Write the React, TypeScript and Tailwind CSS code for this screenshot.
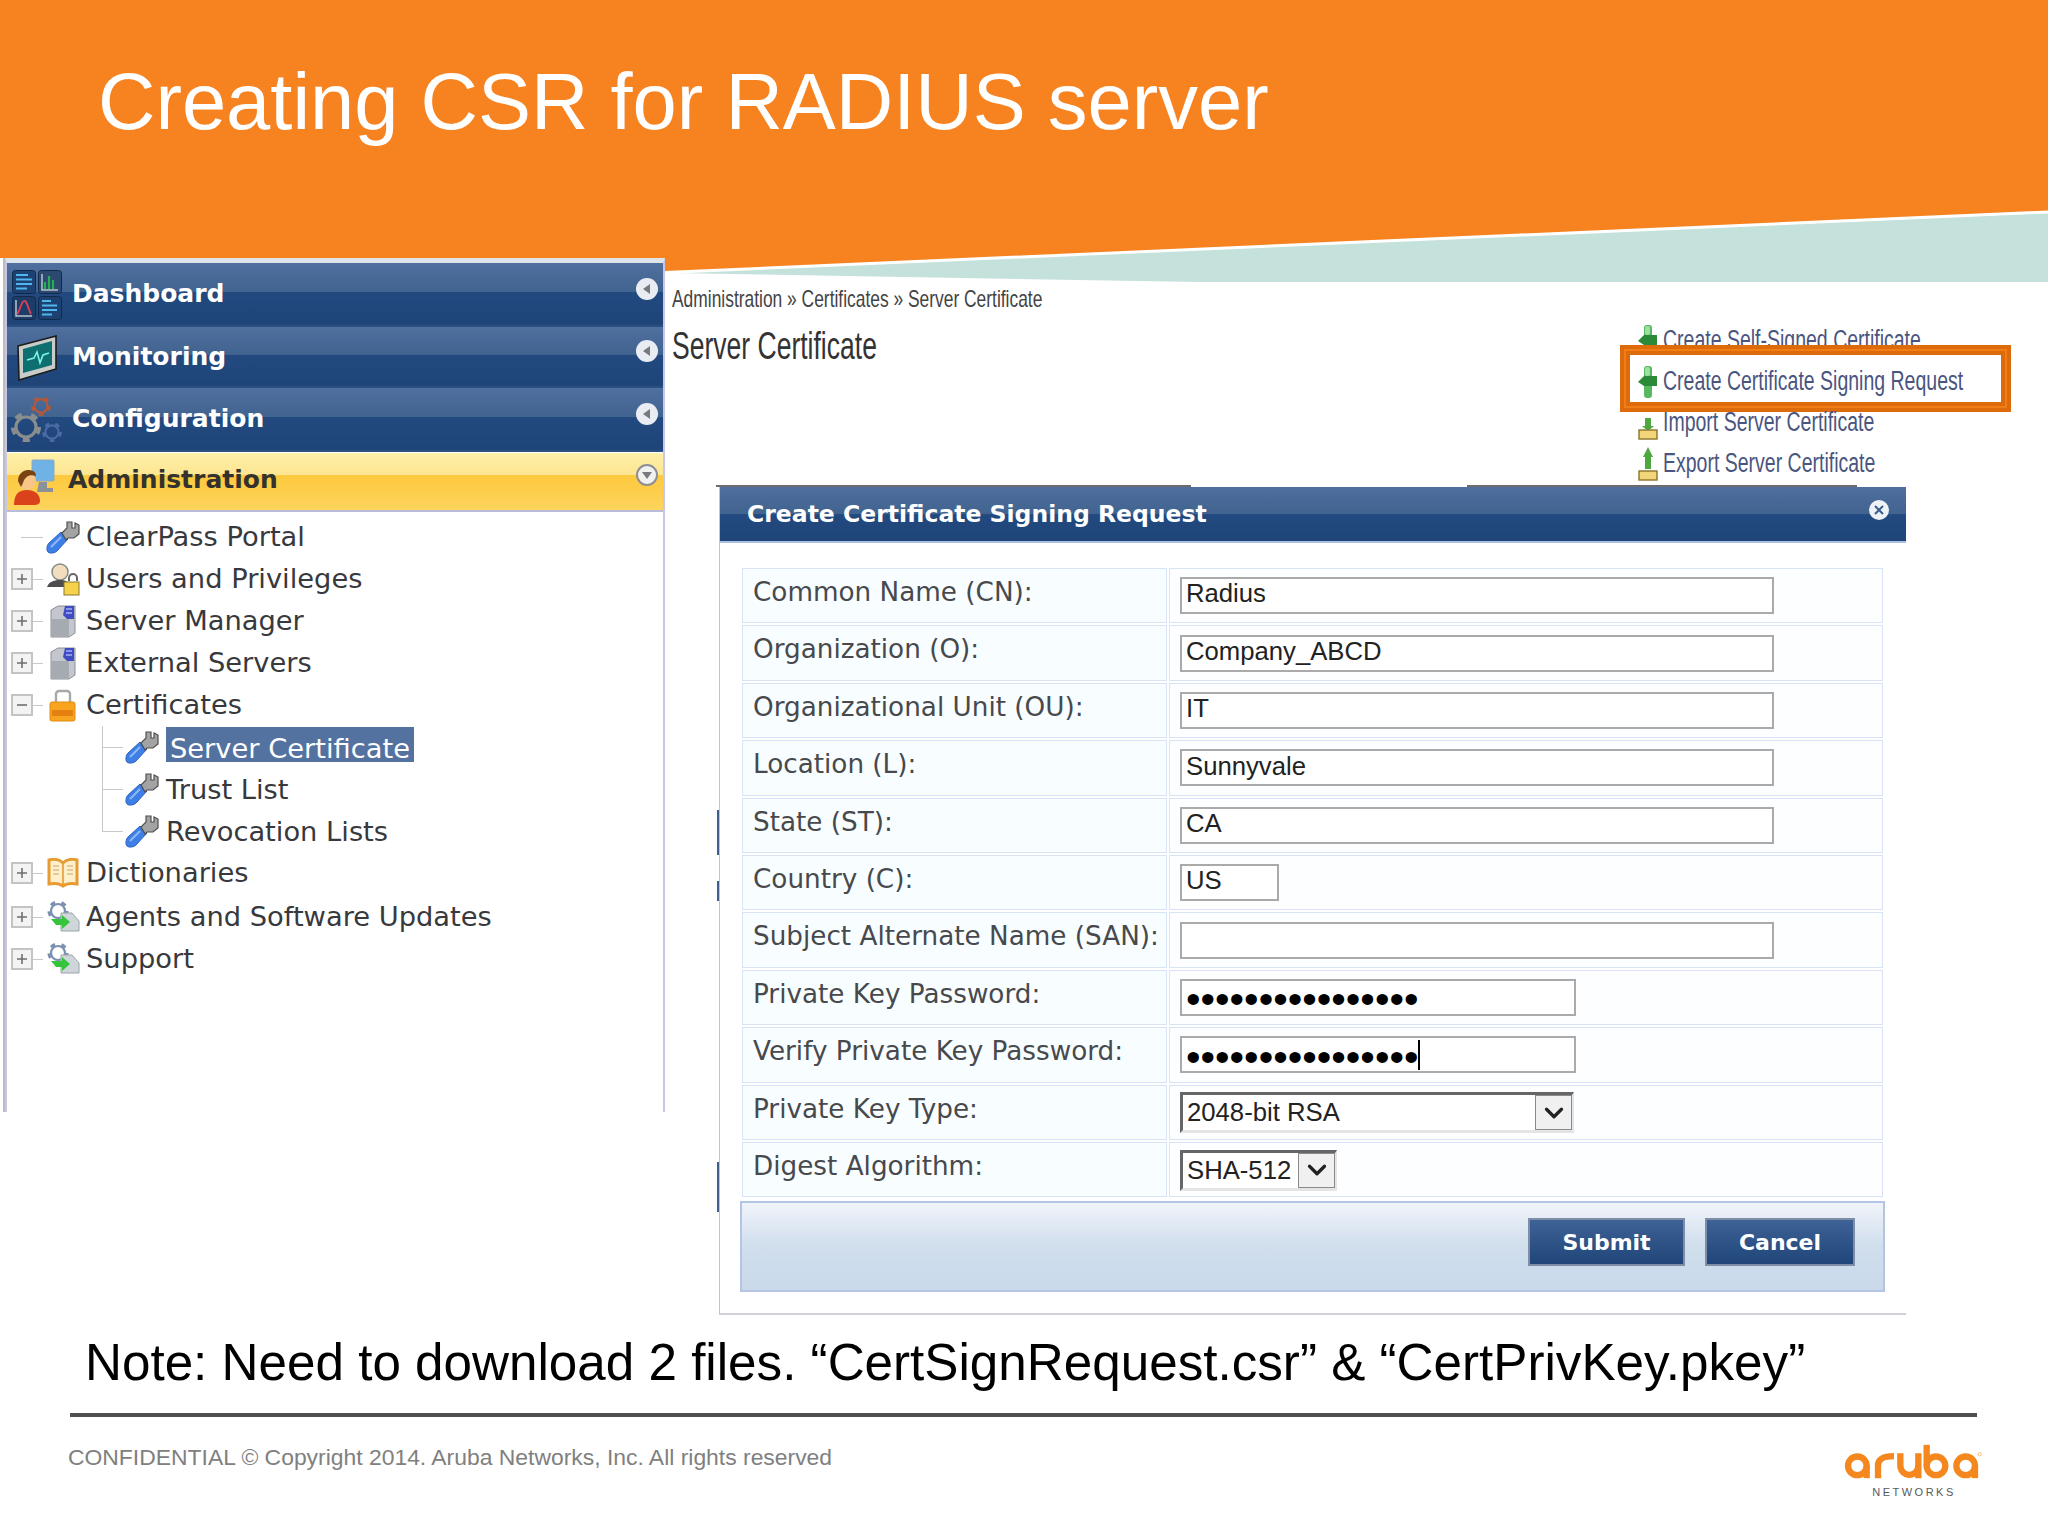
import { ChevronDown } from 'lucide-react';
import { clsx } from 'clsx';

function DashboardIcon() {
  return (
    <svg width="50" height="50" viewBox="0 0 50 50">
      <rect x="0.5" y="0.5" width="23" height="23" rx="3" fill="#1d4170" stroke="#12294a" />
      <rect x="26.5" y="0.5" width="23" height="23" rx="3" fill="#2c4a70" stroke="#12294a" />
      <rect x="0.5" y="26.5" width="23" height="23" rx="3" fill="#1d3c68" stroke="#12294a" />
      <rect x="26.5" y="26.5" width="23" height="23" rx="3" fill="#1d4170" stroke="#12294a" />
      <path d="M4 5h12M4 9.5h16M4 14h16M4 18.5h11" stroke="#4fb6ee" strokeWidth="2" />
      <path d="M30 4v16h16" stroke="#b9c4cf" strokeWidth="1.5" fill="none" />
      <path d="M33 19v-7M37 19V6M41 19v-9" stroke="#26b14e" strokeWidth="2.2" />
      <path d="M4 30v16h16" stroke="#b9c4cf" strokeWidth="1.5" fill="none" />
      <path d="M5 44c3-3 4-12 7-13s4 8 7 13" stroke="#e0405a" strokeWidth="1.8" fill="none" />
      <path d="M30 31h9M30 35.5h15M30 40h15M30 44.5h10" stroke="#4fb6ee" strokeWidth="2" />
    </svg>
  );
}

function MonitorIcon() {
  return (
    <svg width="42" height="46" viewBox="0 0 42 46">
      <path d="M2 11 40 1v33L3 45Z" fill="#c9cdc9" stroke="#1b1b1b" strokeWidth="1.6" />
      <path d="M7 14 36 6v24L7 38Z" fill="#0e6f70" />
      <path d="M11 25l7-2 3-6 3 11 3-8 6-2" stroke="#7ff3e6" strokeWidth="1.6" fill="none" />
    </svg>
  );
}

function Gear({ x, y, r, color }: { x: number; y: number; r: number; color: string }) {
  return (
    <g fill="none" stroke={color}>
      <circle cx={x} cy={y} r={r} strokeWidth={r * 0.32} />
      <circle cx={x} cy={y} r={r * 1.3} strokeWidth={r * 0.42} strokeDasharray={`${r * 0.7} ${r * 0.95}`} />
    </g>
  );
}

function GearsIcon() {
  return (
    <svg width="52" height="50" viewBox="0 0 52 50">
      <Gear x={30} y={11} r={6.6} color="#b5583a" />
      <Gear x={15} y={32} r={10} color="#8a8d8e" />
      <Gear x={41} y={37} r={6.6} color="#4a6ba3" />
    </svg>
  );
}

function AdminIcon() {
  return (
    <svg width="44" height="46" viewBox="0 0 44 46">
      <rect x="19" y="1" width="22" height="21" rx="1" fill="#6fb2e6" stroke="#8fa8bd" />
      <path d="M26 23h8v6h6v4H24Z" fill="#8a9199" />
      <circle cx="14" cy="22" r="9" fill="#f7c688" />
      <path d="M5 22c0-7 5-11 10-11s8 2 8 6c-6-2-11 0-13 7l-2 4Z" fill="#7a4310" />
      <path d="M1 46c0-10 4-15 13-15s13 5 13 11c0 3-3 4-6 4Z" fill="#d9421a" />
    </svg>
  );
}

function WrenchIcon() {
  return (
    <svg width="34" height="34" viewBox="0 0 34 34">
      <path d="M15 12l7 7-11 12c-2 2-7 3-9 1s-1-7 1-9Z" fill="#3d7fe6" stroke="#2a62c4" />
      <path d="M5 27 15 17" stroke="#8fb8f5" strokeWidth="2" />
      <path d="M16 13l5-5V2h5v6h3V3l4 2v9l-5 4h-6l-2 2Z" fill="#a3a3a3" stroke="#4f4f4f" strokeWidth="1.2" />
    </svg>
  );
}

function UsersIcon() {
  return (
    <svg width="34" height="34" viewBox="0 0 34 34">
      <circle cx="14" cy="10" r="8" fill="#f3ddbf" stroke="#8a8a8a" strokeWidth="1.5" />
      <path d="M1 25c2-5 6-7 13-7s9 2 9 7Z" fill="#4d4d4d" />
      <path d="M23 19v-3a4 4 0 0 1 8 0v3" fill="none" stroke="#666" strokeWidth="2" />
      <rect x="18" y="20" width="15" height="13" fill="#f6d24a" stroke="#8a7a30" />
    </svg>
  );
}

function ServerIcon() {
  return (
    <svg width="28" height="34" viewBox="0 0 28 34">
      <path d="M2 6 9 2h17v27l-6 4H2Z" fill="#c3c7cd" stroke="#8b8f96" />
      <path d="M2 15h18v18H2Z" fill="#a6aab1" />
      <path d="M14 11l2-9h9v13h-7Z" fill="#3f4cc4" />
      <path d="M17 5h6M17 9h6" stroke="#a8b0f0" strokeWidth="1.4" />
    </svg>
  );
}

function LockIcon() {
  return (
    <svg width="28" height="34" viewBox="0 0 28 34">
      <path d="M7 15V6a3 3 0 0 1 3-3h8a3 3 0 0 1 3 3v9" fill="none" stroke="#a8a8a8" strokeWidth="2.4" />
      <rect x="1" y="14" width="25" height="19" rx="2" fill="#f8a41f" stroke="#e08a10" />
      <rect x="3" y="22" width="21" height="6" fill="#e4800f" />
    </svg>
  );
}

function BookIcon() {
  return (
    <svg width="34" height="30" viewBox="0 0 34 30">
      <path d="M17 5C13 1 7 1 3 2v24c5-1 10-1 14 2 4-3 9-3 14-2V2c-4-1-10-1-14 3Z" fill="#ffefcb" stroke="#e79c33" strokeWidth="3" />
      <path d="M17 5v23" stroke="#e79c33" strokeWidth="1.6" />
      <path d="M7 8h6M7 12h6M7 16h6M21 8h6M21 12h6M21 16h6" stroke="#dcc08a" strokeWidth="1.4" />
    </svg>
  );
}

function AgentIcon() {
  return (
    <svg width="34" height="34" viewBox="0 0 34 34">
      <Gear x={12} y={11} r={7} color="#7b8fb0" />
      <path d="M15 13h11l7 8v10H15Z" fill="#cfd6da" stroke="#9aa3a8" />
      <path d="M5 19h11v-4l8 7-8 7v-4H10Z" fill="#35c43c" />
    </svg>
  );
}

function GreenPlus() {
  return (
    <svg width="20" height="32" viewBox="0 0 20 32">
      <rect x="6" y="0" width="8" height="32" rx="3" fill="#58b85f" />
      <path d="M0 16l6-6h13v10H6Z" fill="#2b8a37" />
      <rect x="7" y="1" width="5" height="9" rx="2" fill="#9fe0a2" />
    </svg>
  );
}

function BoxArrow({ tall }: { tall?: boolean }) {
  return (
    <svg width="20" height="34" viewBox="0 0 20 34">
      <path d={tall ? 'M10 0 15 10h-2v12H7V10H5Z' : 'M7 12h6v8h3l-6 5-6-5h3Z'} fill="#4ca83f" />
      <rect x="1" y="24" width="18" height="9" fill="#f2d479" stroke="#8c7428" strokeWidth="1.4" />
    </svg>
  );
}

function CircleArrow({ open }: { open?: boolean }) {
  return (
    <div
      className={clsx(
        'ml-auto mr-[5px] -mt-[13px] grid h-[22px] w-[22px] place-items-center rounded-full',
        open ? 'border-2 border-[#8d8f96] bg-[#f1f1ef]' : 'bg-[#e9edf3]',
      )}
    >
      <svg width="12" height="12" viewBox="0 0 12 12">
        <path d={open ? 'M1 3h10L6 10Z' : 'M9 1v10L2 6Z'} fill="#77797f" />
      </svg>
    </div>
  );
}

const navRows = [
  { label: 'Dashboard', icon: <DashboardIcon />, height: 'h-[64px]' },
  { label: 'Monitoring', icon: <MonitorIcon />, height: 'h-[61px]' },
  { label: 'Configuration', icon: <GearsIcon />, height: 'h-[64px]' },
];

function Expander({ open }: { open?: boolean }) {
  return (
    <div className="grid h-[22px] w-[22px] place-items-center border-2 border-[#c4c4c4] bg-[#f3f3f3]">
      <svg width="12" height="12" viewBox="0 0 12 12">
        <path d={open ? 'M1 6h10' : 'M1 6h10M6 1v10'} stroke="#6e6e6e" strokeWidth="1.6" />
      </svg>
    </div>
  );
}

function TreeRow({ label, icon, kind, className }: { label: string; icon: React.ReactNode; kind: 'leaf' | 'plus' | 'minus'; className?: string }) {
  return (
    <div className={clsx('flex h-[42px] items-center pl-[4px]', className)}>
      {kind === 'leaf' ? <div className="w-[10px]" /> : <Expander open={kind === 'minus'} />}
      <div className={clsx('h-px bg-[#c8c8c8]', kind === 'leaf' ? 'w-[22px]' : 'w-[10px]')} />
      <div className="ml-[3px] flex w-[34px] justify-center">{icon}</div>
      <div className="ml-[6px] whitespace-nowrap text-[27.3px] text-[#38393d]">{label}</div>
    </div>
  );
}

function ChildRow({ label, active, last }: { label: string; active?: boolean; last?: boolean }) {
  return (
    <div className="flex h-[42px] items-stretch pl-[95px]">
      <div className="flex w-[21px] flex-col">
        <div className="flex-1 border-b border-l border-[#c8c8c8]" />
        <div className={clsx('flex-1', !last && 'border-l border-[#c8c8c8]')} />
      </div>
      <div className="ml-[2px] flex w-[34px] items-center justify-center">
        <WrenchIcon />
      </div>
      <div className="ml-[7px] flex items-center">
        {active ? (
          <div className="mb-[5px] flex h-[35px] items-center whitespace-nowrap bg-[#53729f] px-[4px] pt-[8px] text-[27.3px] leading-none text-white">{label}</div>
        ) : (
          <div className="whitespace-nowrap pt-[3px] text-[27.3px] text-[#38393d]">{label}</div>
        )}
      </div>
    </div>
  );
}

function Sidebar() {
  return (
    <aside className="h-[854px] w-[662px] self-start border-l-2 border-[#bdbdbd] bg-white font-['DejaVu_Sans',sans-serif]">
      <div className="h-full border-x-2 border-t-[5px] border-x-[#c6c6e8] border-t-[#dfe3ea]">
        {navRows.map((row) => (
          <div
            key={row.label}
            className={clsx(
              row.height,
              'flex items-center bg-[linear-gradient(#50709f_0%,#41638f_45%,#234a80_46%,#1e4478_95%,#2f5488_100%)]',
            )}
          >
            <div className="flex w-[65px] justify-center pr-[6px]">{row.icon}</div>
            <div className="pb-[2px] text-[25px] font-bold text-white">{row.label}</div>
            <CircleArrow />
          </div>
        ))}
        <div className="mt-px flex h-[59px] items-center border-b-2 border-[#b8bcd8] bg-[linear-gradient(#fdf0a8_0%,#fde592_38%,#fdc93e_39%,#fed45c_100%)]">
          <div className="flex w-[61px] justify-center pr-[6px]">
            <AdminIcon />
          </div>
          <div className="pb-[4px] text-[25px] font-bold text-[#33322e]">Administration</div>
          <CircleArrow open />
        </div>
        <div className="pt-[4px]">
          <TreeRow label="ClearPass Portal" icon={<WrenchIcon />} kind="leaf" />
          <TreeRow label="Users and Privileges" icon={<UsersIcon />} kind="plus" />
          <TreeRow label="Server Manager" icon={<ServerIcon />} kind="plus" />
          <TreeRow label="External Servers" icon={<ServerIcon />} kind="plus" />
          <TreeRow label="Certificates" icon={<LockIcon />} kind="minus" />
          <ChildRow label="Server Certificate" active />
          <ChildRow label="Trust List" />
          <ChildRow label="Revocation Lists" last />
          <TreeRow label="Dictionaries" icon={<BookIcon />} kind="plus" />
          <TreeRow label="Agents and Software Updates" icon={<AgentIcon />} kind="plus" className="mt-[2px]" />
          <TreeRow label="Support" icon={<AgentIcon />} kind="plus" />
        </div>
      </div>
    </aside>
  );
}

type FormRow = {
  label: string;
  kind: 'text' | 'password' | 'select';
  value: string;
  width: string;
  caret?: boolean;
};

const formRows: FormRow[] = [
  { label: 'Common Name (CN):', kind: 'text', value: 'Radius', width: 'w-[594px]' },
  { label: 'Organization (O):', kind: 'text', value: 'Company_ABCD', width: 'w-[594px]' },
  { label: 'Organizational Unit (OU):', kind: 'text', value: 'IT', width: 'w-[594px]' },
  { label: 'Location (L):', kind: 'text', value: 'Sunnyvale', width: 'w-[594px]' },
  { label: 'State (ST):', kind: 'text', value: 'CA', width: 'w-[594px]' },
  { label: 'Country (C):', kind: 'text', value: 'US', width: 'w-[99px]' },
  { label: 'Subject Alternate Name (SAN):', kind: 'text', value: '', width: 'w-[594px]' },
  { label: 'Private Key Password:', kind: 'password', value: '••••••••••••••••', width: 'w-[396px]' },
  { label: 'Verify Private Key Password:', kind: 'password', value: '••••••••••••••••', width: 'w-[396px]', caret: true },
  { label: 'Private Key Type:', kind: 'select', value: '2048-bit RSA', width: 'w-[394px]' },
  { label: 'Digest Algorithm:', kind: 'select', value: 'SHA-512', width: 'w-[157px]' },
];

function Field({ row }: { row: FormRow }) {
  if (row.kind === 'select') {
    return (
      <div className={clsx(row.width, 'mt-[1px] flex h-[41px] items-stretch border-b-[3px] border-l-[3px] border-r-[2px] border-t-[3px] border-b-[#e4e4e4] border-l-[#666] border-r-[#e4e4e4] border-t-[#666] bg-white')}>
        <div className="flex-1 whitespace-nowrap pl-[4px] text-[25.7px] leading-[35px] text-[#222]">{row.value}</div>
        <div className="grid w-[37px] place-items-center border border-[#8a8a8a] bg-[#f0f0f0]">
          <ChevronDown size={30} strokeWidth={2.6} color="#222" />
        </div>
      </div>
    );
  }
  return (
    <div className={clsx(row.width, 'flex h-[37px] items-center border-2 border-[#aaa] bg-white pl-[4px] text-[#222]')}>
      {row.kind === 'password' ? (
        <>
          <span className="whitespace-nowrap pt-[3px] text-[41.5px] leading-none text-black">{row.value}</span>
          {row.caret && <span className="h-[30px] w-[2px] bg-black" />}
        </>
      ) : (
        <span className="whitespace-nowrap pb-[3px] text-[25.7px] leading-none">{row.value}</span>
      )}
    </div>
  );
}

function CsrDialog() {
  return (
    <section className="relative ml-[54px] h-[828px] w-[1187px] border-b-2 border-l border-b-[#cfd2d6] border-l-[#c4c4c4] bg-white">
      <div className="absolute -left-[3px] top-[323px] h-[45px] w-[2px] bg-[#3f5f91]" />
      <div className="absolute -left-[3px] top-[394px] h-[20px] w-[2px] bg-[#3f5f91]" />
      <div className="absolute -left-[3px] top-[675px] h-[50px] w-[2px] bg-[#3f5f91]" />
      <div className="flex h-[56px] items-center justify-between border-b-2 border-[#a9c0e0] bg-[linear-gradient(#4f6f9f_0%,#41638f_50%,#234a80_51%,#1e4478_100%)] pl-[27px] pr-[17px] font-['DejaVu_Sans',sans-serif]">
        <div className="pt-[2px] text-[23.5px] font-bold text-white">Create Certificate Signing Request</div>
        <div className="-mt-[8px] grid h-[20px] w-[20px] place-items-center rounded-full bg-[#eef1f6]">
          <svg width="10" height="10" viewBox="0 0 10 10">
            <path d="M1 1l8 8M9 1l-8 8" stroke="#3b5b8c" strokeWidth="2" />
          </svg>
        </div>
      </div>
      <div className="pl-[22px] pt-[25px]">
        <div className="grid w-[1141px] grid-cols-[425px_714px] gap-x-[2px] gap-y-[2px] [grid-auto-rows:55.4px]">
          {formRows.map((row) => (
            <div key={row.label} className="contents">
              <div className="border-[1.5px] border-[#d8e3f6] bg-[#f8fdff] pb-[8px] pl-[10px] pt-[7px] font-['DejaVu_Sans',sans-serif] text-[26.25px] leading-[32px] whitespace-nowrap text-[#47494c]">
                {row.label}
              </div>
              <div className="flex items-center border-[1.5px] border-[#d8e3f6] bg-[#fcfeff] pl-[10px]">
                <Field row={row} />
              </div>
            </div>
          ))}
        </div>
        <div className="-ml-[2px] mt-[4px] flex h-[91px] w-[1145px] items-start justify-end gap-[20px] border-2 border-[#b3c4e4] bg-[linear-gradient(#f0f4fa_0%,#d0deed_50%,#c9d9ea_100%)] pr-[28px] pt-[15px] font-['DejaVu_Sans',sans-serif]">
          <div className="grid h-[48px] w-[157px] place-items-center border-2 border-[#7f8ea6] bg-[linear-gradient(#3f6296_0%,#1f4579_100%)] text-[22px] font-bold text-white">Submit</div>
          <div className="grid h-[48px] w-[150px] place-items-center border-2 border-[#7f8ea6] bg-[linear-gradient(#3f6296_0%,#1f4579_100%)] text-[22px] font-bold text-white">Cancel</div>
        </div>
      </div>
    </section>
  );
}

function ActionLink({ label, icon, raised }: { label: string; icon: React.ReactNode; raised?: boolean }) {
  return (
    <div className={clsx('flex h-[41px] items-center', raised && 'relative')}>
      <div className="flex w-[25px] shrink-0 justify-start">{icon}</div>
      <div className="origin-left scale-x-[0.722] whitespace-nowrap text-[27px] text-[#4a5580]">{label}</div>
    </div>
  );
}

function CertificatePanel() {
  return (
    <div className="flex-1">
      <div className="flex h-[227px]">
        <div className="w-[973px] pl-[7px] pt-[26px] text-[#333]">
          <div className="origin-left scale-x-[0.725] whitespace-nowrap text-[24px] leading-[30px] text-[#444]">
            Administration » Certificates » Server Certificate
          </div>
          <div className="mt-[10px] origin-left scale-x-[0.698] whitespace-nowrap text-[38px] leading-[44px]">Server Certificate</div>
        </div>
        <div className="relative mt-[62px] w-[410px] self-start">
          <ActionLink label="Create Self-Signed Certificate" icon={<GreenPlus />} />
          <div className="absolute -left-[18px] top-[25px] h-[67px] w-[391px] border-[4px] border-[#dd6b0c] bg-white">
            <div className="h-full border-[2px] border-[#f07d15]">
              <div className="h-full border-[4px] border-[#dd6b0c]" />
            </div>
          </div>
          <ActionLink label="Create Certificate Signing Request" icon={<GreenPlus />} raised />
          <ActionLink label="Import Server Certificate" icon={<BoxArrow />} />
          <ActionLink label="Export Server Certificate" icon={<BoxArrow tall />} />
        </div>
      </div>
      <div className="ml-[51px] flex h-[2px]">
        <div className="w-[475px] bg-[#6b6b70]" />
        <div className="w-[276px]" />
        <div className="w-[390px] bg-[#6b6b70]" />
      </div>
      <CsrDialog />
    </div>
  );
}

function ArubaLogo() {
  return (
    <svg width="140" height="37" viewBox="130 65 420 110">
      <g fill="none" stroke="#f5871f" strokeWidth="19">
        <circle cx="170" cy="133" r="28" />
        <path d="M198 133v37" />
        <path d="M232 170v-38c0-19 14-28 48-28" />
        <path d="M299 95v37a27 28 0 0 0 54 0V95M353 132v38" />
        <circle cx="406" cy="133" r="28" />
        <path d="M378 70v63" />
        <circle cx="495" cy="133" r="28" />
        <path d="M523 133v37" />
      </g>
      <circle cx="537" cy="98" r="5" fill="none" stroke="#f5871f" strokeWidth="1.6" />
    </svg>
  );
}

export default function App() {
  return (
    <div className="relative h-[1536px] w-[2048px] overflow-hidden bg-white font-['Liberation_Sans',Arial,sans-serif]">
      <svg className="absolute left-0 top-0" width="2048" height="290" viewBox="0 0 2048 290">
        <polygon points="0,0 2048,0 2048,212 665,272 665,258 0,258" fill="#f68220" />
        <polygon points="669,273 2048,213 2048,282 1200,282" fill="#c5e1dc" />
        <polyline points="665,272.5 2048,212" fill="none" stroke="#ffffff" strokeWidth="3" />
      </svg>

      <header className="relative h-[258px] pl-[98px] pt-[52px]">
        <h1 className="text-[79.5px] leading-[100px] font-normal text-white">Creating CSR for RADIUS server</h1>
      </header>

      <div className="relative flex h-[1057px] pl-[3px]">
        <Sidebar />
        <CertificatePanel />
      </div>

      <div className="h-[94px] whitespace-nowrap pl-[85px] pt-[1px] text-[51.2px] leading-[94px] text-black">
        Note: Need to download 2 files. “CertSignRequest.csr” &amp; “CertPrivKey.pkey”
      </div>
      <div className="relative ml-[70px] mt-[4px] h-[4px] w-[1907px] bg-[#505052]" />
      <footer className="relative flex items-start justify-between pl-[68px] pr-[64px]">
        <div className="mt-[25px] text-[22.9px] leading-[30px] text-[#808080]">CONFIDENTIAL © Copyright 2014. Aruba Networks, Inc. All rights reserved</div>
        <div className="mt-[26px] flex flex-col items-center">
          <ArubaLogo />
          <div className="mt-[5px] text-[11px] leading-[14px] tracking-[2.5px] text-[#58595b]">NETWORKS</div>
        </div>
      </footer>
    </div>
  );
}
